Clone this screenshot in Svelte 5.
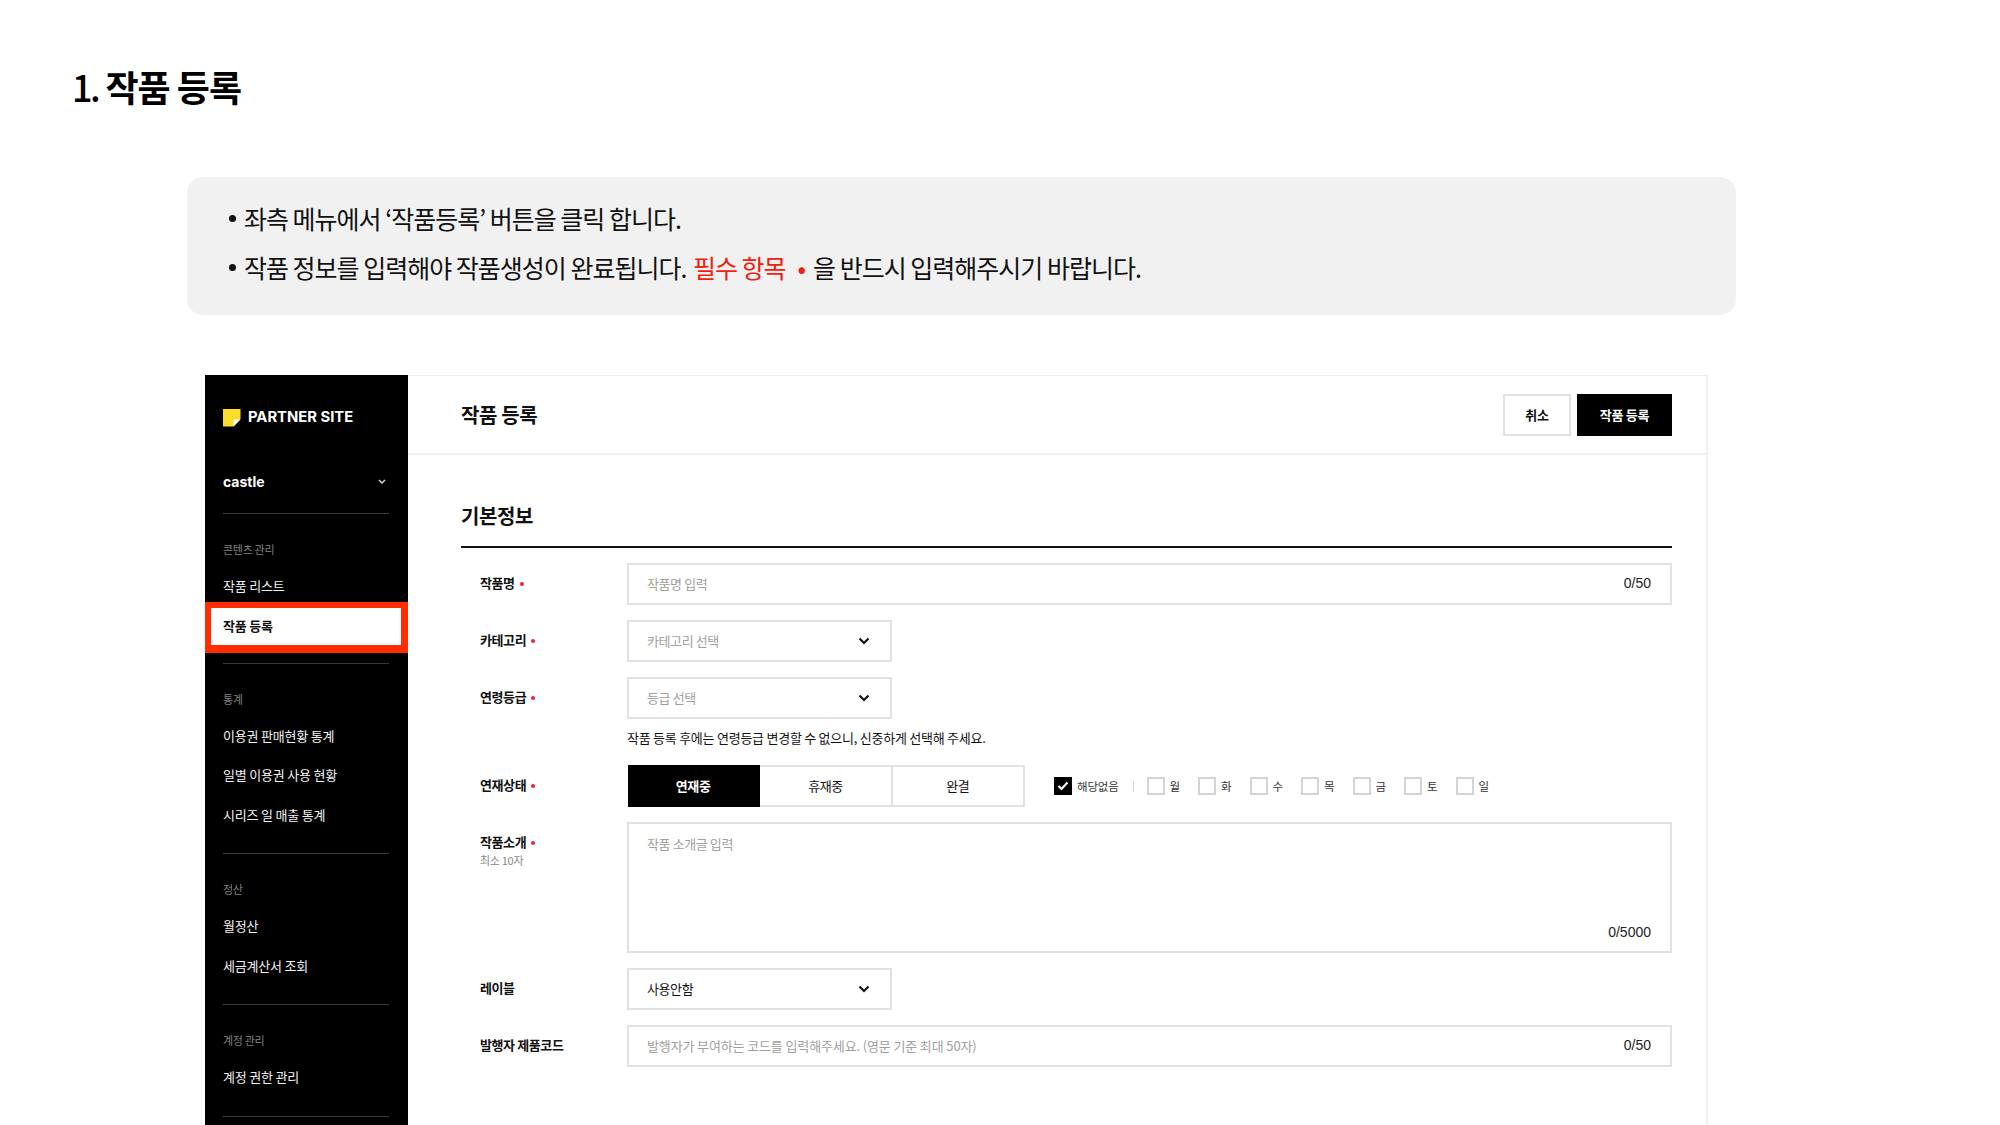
<script>
  const days = ["월", "화", "수", "목", "금", "토", "일"];
  const statuses = ["연재중", "휴재중", "완결"];
  const groups = [
    { title: "콘텐츠 관리", items: ["작품 리스트", "작품 등록"] },
    { title: "통계", items: ["이용권 판매현황 통계", "일별 이용권 사용 현황", "시리즈 일 매출 통계"] },
    { title: "정산", items: ["월정산", "세금계산서 조회"] },
    { title: "계정 관리", items: ["계정 권한 관리"] }
  ];
</script>

{#snippet chevron()}
  <svg class="chev" width="12" height="8" viewBox="0 0 12 8"><path d="M1.5 1.5 6 6l4.5-4.5" fill="none" stroke="#111" stroke-width="2.2" /></svg>
{/snippet}

<div class="page">
  <h1><span class="num">1.</span> 작품 등록</h1>

  <ul class="notes">
    <li>좌측 메뉴에서 ‘작품등록’ 버튼을 클릭 합니다.</li>
    <li>작품 정보를 입력해야 작품생성이 완료됩니다. <span class="red must">필수 항목</span><span class="red dot">•</span>을 반드시 입력해주시기 바랍니다.</li>
  </ul>

  <div class="shot">
    <aside>
      <div class="brand">
        <svg width="18" height="18" viewBox="0 0 18 18"><path d="M0 0h17.500v10l-7 7.500H0z" fill="#ffdc2b" /><path d="M17.500 10.500l-7 7v-5.500q0-1.500 1.500-1.500z" fill="#fff" /></svg>
        <span>PARTNER SITE</span>
      </div>
      <div class="account">
        <span>castle</span>
        <svg width="8" height="6" viewBox="0 0 8 6"><path d="M1 1l3 3 3-3" fill="none" stroke="#ddd" stroke-width="1.400" /></svg>
      </div>
      {#each groups as group}
        <nav>
          <div class="nav-title">{group.title}</div>
          {#each group.items as item}
            <div class="nav-item" class:active={item === "작품 등록"}>{item}</div>
          {/each}
        </nav>
      {/each}
    </aside>

    <main>
      <header>
        <h2>작품 등록</h2>
        <div class="actions">
          <button class="cancel">취소</button>
          <button class="submit">작품 등록</button>
        </div>
      </header>

      <section>
        <h3>기본정보</h3>

        <div class="form">
          <div class="label req">작품명</div>
          <div class="field">
            <input placeholder="작품명 입력" />
            <span class="count">0/50</span>
          </div>

          <div class="label req">카테고리</div>
          <div class="field select muted">카테고리 선택 {@render chevron()}</div>

          <div class="label req">연령등급</div>
          <div>
            <div class="field select muted">등급 선택 {@render chevron()}</div>
            <p class="help">작품 등록 후에는 연령등급 변경할 수 없으니, 신중하게 선택해 주세요.</p>
          </div>

          <div class="label req">연재상태</div>
          <div class="status-row">
            <div class="segments">
              {#each statuses as s, i}
                <div class="segment" class:on={i === 0}>{s}</div>
              {/each}
            </div>
            <div class="checks">
              <span class="check on">
                <i><svg width="12" height="10" viewBox="0 0 12 10"><path d="M1.500 5l3 3 6-6.500" fill="none" stroke="#fff" stroke-width="2.200" /></svg></i>
                해당없음
              </span>
              <b class="sep"></b>
              {#each days as d}
                <span class="check"><i></i>{d}</span>
              {/each}
            </div>
          </div>

          <div class="label tall">
            <span class="req">작품소개</span>
            <small>최소 10자</small>
          </div>
          <div class="field area">
            <textarea placeholder="작품 소개글 입력"></textarea>
            <span class="count">0/5000</span>
          </div>

          <div class="label">레이블</div>
          <div class="field select">사용안함 {@render chevron()}</div>

          <div class="label">발행자 제품코드</div>
          <div class="field">
            <input class="wide" placeholder="발행자가 부여하는 코드를 입력해주세요. (영문 기준 최대 50자)" />
            <span class="count">0/50</span>
          </div>
        </div>
      </section>
    </main>
  </div>
</div>

<style>
  :global(body) {
    margin: 0;
    background: #fff;
  }

  .page {
    height: 1125px;
    overflow: hidden;
    color: #111;
    font-family: "Noto Sans CJK KR", "Noto Sans", sans-serif;
  }

  h1 {
    margin: 0;
    padding: 63px 0 0 72px;
    height: 112px;
    box-sizing: border-box;
    font-size: 36px;
    line-height: 46px;
    font-weight: 700;
    letter-spacing: -1px;
    color: #000;
  }

  .num {
    font-weight: 500;
    letter-spacing: -2.5px;
  }

  .notes {
    margin: 65px 0 0 187px;
    padding: 17px 0 0 57px;
    width: 1549px;
    height: 138px;
    box-sizing: border-box;
    list-style: none;
    background: #f1f1f1;
    border-radius: 16px;
    font-size: 25px;
    line-height: 49px;
    letter-spacing: -1px;
  }

  .notes li {
    position: relative;
    white-space: nowrap;
  }

  .notes li::before {
    content: "";
    position: absolute;
    left: -15px;
    top: 21px;
    width: 7px;
    height: 7px;
    border-radius: 50%;
    background: #111;
  }

  .red {
    color: #f02010;
  }

  .must {
    margin-left: 2px;
  }

  .dot {
    margin: 0 8px 0 12px;
  }

  .shot {
    display: flex;
    margin: 60px 0 0 205px;
    width: 1503px;
    height: 800px;
  }

  aside {
    flex: none;
    width: 203px;
    background: #000;
    color: #fff;
  }

  .brand {
    display: flex;
    align-items: flex-start;
    gap: 7px;
    padding: 34px 0 0 18px;
    height: 47px;
    font-family: Inter, sans-serif;
    font-size: 14.8px;
    font-weight: 700;
    line-height: 17px;
  }

  .account {
    display: flex;
    justify-content: space-between;
    align-items: center;
    box-sizing: border-box;
    margin: 0 19px 0 18px;
    padding: 0 3px 6px 0;
    height: 58px;
    border-bottom: 1px solid #3a3a3a;
    font-family: Inter, sans-serif;
    font-size: 14px;
    font-weight: 700;
  }

  nav {
    margin: 0 19px 0 18px;
    padding: 26px 0 19px;
    border-bottom: 1px solid #3a3a3a;
  }

  nav:nth-of-type(1) {
    padding-bottom: 10px;
  }

  .nav-title {
    height: 18px;
    margin-bottom: 8px;
    font-size: 11px;
    line-height: 18px;
    color: #808080;
    letter-spacing: -0.3px;
  }

  .nav-item {
    height: 39.5px;
    font-size: 13px;
    line-height: 39px;
    color: #f2f2f2;
    letter-spacing: -0.2px;
  }

  .nav-item.active {
    box-sizing: border-box;
    height: 51px;
    margin: -4px -19px 0 -18px;
    padding-left: 12px;
    border: solid #ff2d00;
    border-width: 6px 7px 8px 6px;
    background: #fff;
    color: #111;
    font-weight: 700;
    line-height: 36px;
  }

  main {
    flex: 1;
    border-top: 1px solid #eee;
    border-right: 2px solid #f0f0f0;
  }

  header {
    display: flex;
    justify-content: space-between;
    align-items: center;
    box-sizing: border-box;
    height: 79px;
    padding: 0 34px 0 53px;
    border-bottom: 2px solid #f0f0f0;
  }

  h2 {
    margin: 0;
    font-size: 20px;
    font-weight: 700;
    letter-spacing: -0.4px;
  }

  .actions {
    display: flex;
    gap: 6px;
  }

  button {
    box-sizing: border-box;
    height: 42px;
    border: 2px solid #e2e2e2;
    background: #fff;
    font: 700 13px "Noto Sans CJK KR", sans-serif;
    letter-spacing: -0.3px;
    color: #111;
  }

  .cancel {
    width: 68px;
  }

  .submit {
    width: 95px;
    background: #000;
    border-color: #000;
    color: #fff;
  }

  section {
    padding: 0 34px 0 53px;
  }

  h3 {
    margin: 0;
    height: 93px;
    box-sizing: border-box;
    padding-top: 44px;
    border-bottom: 2px solid #111;
    font-size: 20px;
    line-height: 34px;
    font-weight: 700;
    letter-spacing: -0.4px;
  }

  .form {
    display: grid;
    grid-template-columns: 166px 1fr;
    row-gap: 15px;
    margin-top: 15px;
  }

  .label {
    padding-left: 19px;
    height: 42px;
    font-size: 13px;
    line-height: 40px;
    font-weight: 700;
    letter-spacing: -0.4px;
  }

  .req::after {
    content: "";
    display: inline-block;
    width: 4px;
    height: 4px;
    margin: 0 0 2px 5px;
    border-radius: 50%;
    background: #f0203a;
  }

  .label.tall {
    display: flex;
    flex-direction: column;
    height: auto;
    line-height: 20px;
    padding-top: 10px;
  }

  small {
    font-size: 11px;
    font-weight: 400;
    line-height: 16px;
    color: #888;
    letter-spacing: -0.3px;
  }

  .field {
    display: flex;
    align-items: center;
    box-sizing: border-box;
    height: 42px;
    padding: 0 19px 2px 18px;
    border: 2px solid #e2e2e2;
    font-size: 13px;
    letter-spacing: -0.4px;
  }

  input,
  textarea {
    flex: 1;
    min-width: 0;
    padding: 0;
    border: 0;
    outline: 0;
    background: none;
    color: #111;
    font: inherit;
    letter-spacing: inherit;
    resize: none;
  }

  input.wide {
    letter-spacing: -0.13px;
  }

  input::placeholder,
  textarea::placeholder {
    color: #a0a0a0;
    opacity: 1;
  }

  .count {
    font-family: "Liberation Sans", Arial, sans-serif;
    font-size: 14px;
    letter-spacing: 0;
    color: #222;
  }

  .select {
    justify-content: space-between;
    width: 265px;
    padding-right: 20px;
  }

  .muted {
    color: #a0a0a0;
  }

  .chev {
    flex: none;
    margin-top: 2px;
  }

  .help {
    margin: 9px 0 2px;
    font-size: 13px;
    line-height: 20px;
    letter-spacing: -0.25px;
  }

  .status-row {
    display: flex;
    align-items: center;
  }

  .segments {
    display: flex;
    margin-left: 1px;
    width: 397px;
    height: 42px;
  }

  .segment {
    flex: 1;
    box-sizing: border-box;
    border: 2px solid #e2e2e2;
    border-left: 0;
    font-size: 13px;
    line-height: 38px;
    text-align: center;
    letter-spacing: -0.4px;
  }

  .segment.on {
    background: #000;
    border-color: #000;
    color: #fff;
    font-weight: 700;
  }

  .checks {
    display: flex;
    align-items: center;
    margin-left: 29px;
    font-size: 11.5px;
    color: #333;
    letter-spacing: -0.2px;
  }

  .check {
    display: flex;
    align-items: center;
    gap: 5px;
    width: 51.5px;
  }

  .check.on {
    width: auto;
  }

  .check i {
    display: flex;
    align-items: center;
    justify-content: center;
    flex: none;
    box-sizing: border-box;
    width: 18px;
    height: 18px;
    border: 2px solid #d4d4d4;
  }

  .check.on i {
    background: #000;
    border-color: #000;
  }

  .sep {
    width: 1px;
    height: 11px;
    margin: 0 13px 0 14px;
    background: #d4d4d4;
  }

  .area {
    position: relative;
    align-items: flex-start;
    height: 131px;
    padding-top: 10px;
  }

  textarea {
    height: 60px;
  }

  .area .count {
    position: absolute;
    right: 19px;
    bottom: 11px;
  }
</style>
